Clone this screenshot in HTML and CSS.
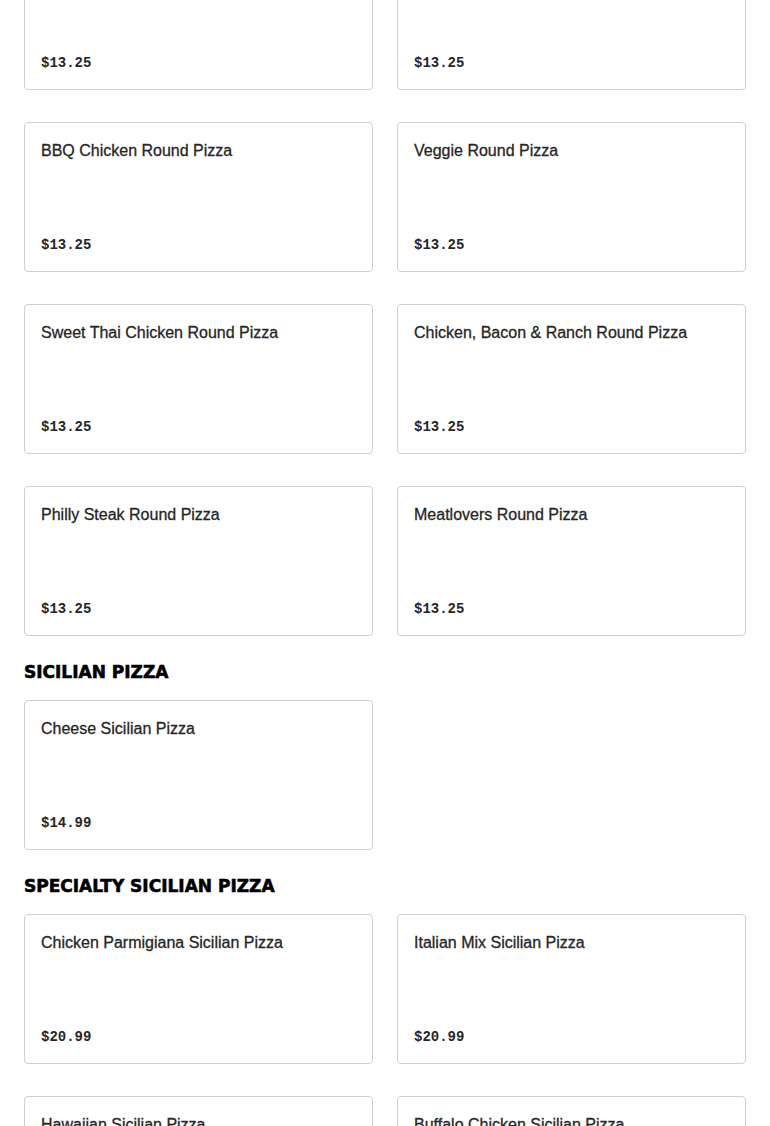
FILE: index.html
```html
<!DOCTYPE html>
<html lang="en">
<head>
  <meta charset="UTF-8" />
  <meta name="viewport" content="width=device-width, initial-scale=1" />
  <title>Menu</title>
  <link rel="stylesheet" href="styles.css">
</head>
<body>

<div class="menu">

  <div class="grid">
    <div class="card"><div class="name">Pepperoni Round Pizza</div><div class="price">$13.25</div></div>
    <div class="card"><div class="name">Hawaiian Round Pizza</div><div class="price">$13.25</div></div>
    <div class="card"><div class="name">BBQ Chicken Round Pizza</div><div class="price">$13.25</div></div>
    <div class="card"><div class="name">Veggie Round Pizza</div><div class="price">$13.25</div></div>
    <div class="card"><div class="name">Sweet Thai Chicken Round Pizza</div><div class="price">$13.25</div></div>
    <div class="card"><div class="name">Chicken, Bacon &amp; Ranch Round Pizza</div><div class="price">$13.25</div></div>
    <div class="card"><div class="name">Philly Steak Round Pizza</div><div class="price">$13.25</div></div>
    <div class="card"><div class="name">Meatlovers Round Pizza</div><div class="price">$13.25</div></div>
  </div>

  <h2 class="section-title">Sicilian Pizza</h2>
  <div class="grid">
    <div class="card"><div class="name">Cheese Sicilian Pizza</div><div class="price">$14.99</div></div>
  </div>

  <h2 class="section-title">Specialty Sicilian Pizza</h2>
  <div class="grid">
    <div class="card"><div class="name">Chicken Parmigiana Sicilian Pizza</div><div class="price">$20.99</div></div>
    <div class="card"><div class="name">Italian Mix Sicilian Pizza</div><div class="price">$20.99</div></div>
    <div class="card"><div class="name">Hawaiian Sicilian Pizza</div><div class="price">$20.99</div></div>
    <div class="card"><div class="name">Buffalo Chicken Sicilian Pizza</div><div class="price">$20.99</div></div>
  </div>

</div>

</body>
</html>
```

FILE: styles.css
```css
body {
  margin: 0;
  background: #fff;
  color: #262626;
  font-family: "Liberation Sans", Arial, sans-serif;
}
.menu {
  padding: 0 24px;
  margin-top: -60px;
}
.grid {
  display: grid;
  grid-template-columns: 1fr 1fr;
  column-gap: 24px;
  row-gap: 32px;
}
.card {
  height: 150px;
  box-sizing: border-box;
  border: 1px solid #d0d0d0;
  border-radius: 4px;
  padding: 16px;
  display: flex;
  flex-direction: column;
  justify-content: space-between;
}
.name {
  font-size: 16px;
  line-height: 24px;
  color: #262626;
  -webkit-text-stroke: 0.3px #262626;
}
.price {
  font-family: "Liberation Mono", "Courier New", monospace;
  font-size: 14px;
  line-height: 20px;
  font-weight: bold;
  color: #262626;
}
.section-title {
  margin: 24px 0 16px;
  font-family: "DejaVu Sans", sans-serif;
  font-size: 17px;
  line-height: 24px;
  font-weight: bold;
  text-transform: uppercase;
  color: #000;
  -webkit-text-stroke: 0.6px #000;
}
```
